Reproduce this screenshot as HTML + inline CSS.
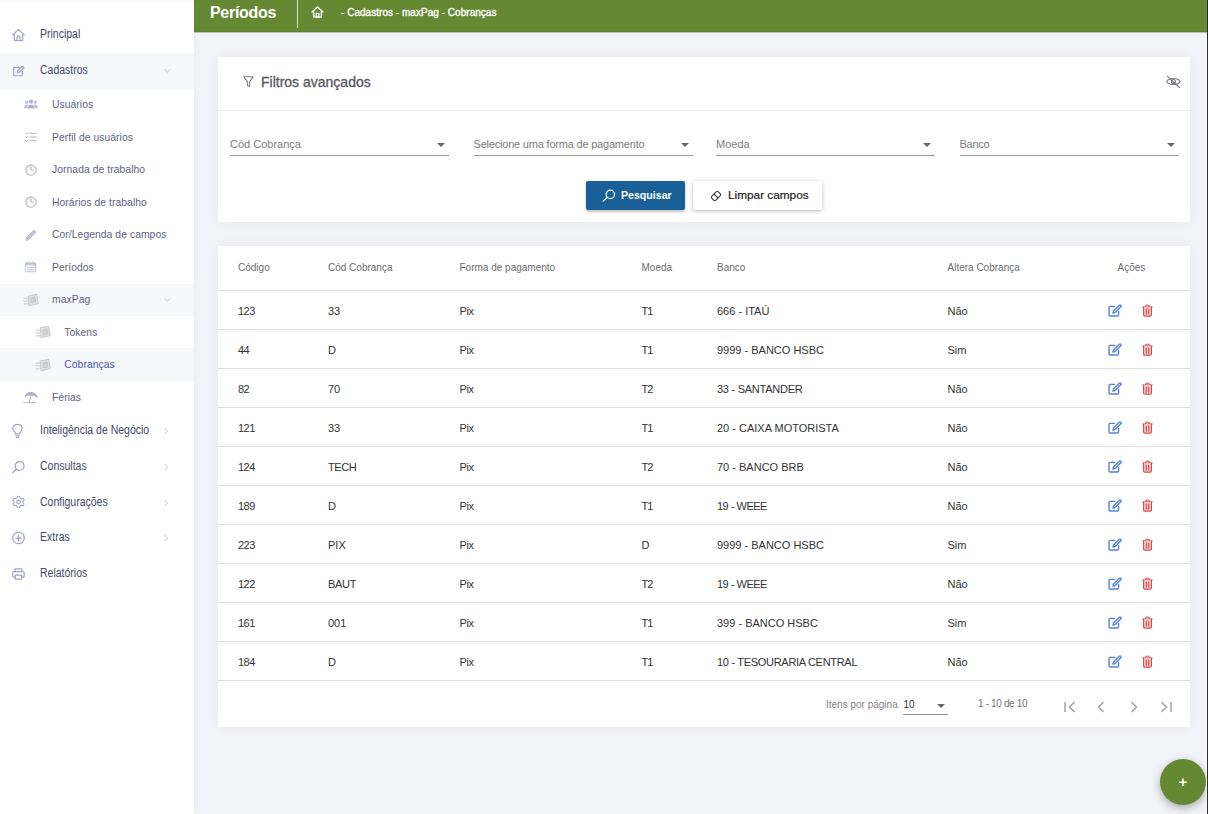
<!DOCTYPE html>
<html lang="pt-BR">
<head>
<meta charset="utf-8">
<title>Períodos</title>
<style>
*{box-sizing:border-box;margin:0;padding:0}
html,body{width:1208px;height:814px;overflow:hidden}
body{background:#f2f3f8;font-family:"Liberation Sans",sans-serif;position:relative;color:#333}
.edge{position:absolute;left:1207px;top:0;width:1px;height:814px;background:#2a2a2c;z-index:50}
.edge2{position:absolute;left:1206px;top:33px;width:1px;height:781px;background:#fdfdff;z-index:49}
.edge3{position:absolute;left:1206px;top:0;width:1px;height:32px;background:#6a8e38;z-index:49}
/* sidebar */
.side{position:absolute;left:0;top:0;width:194px;height:814px;background:#fff;box-shadow:0 0 6px rgba(82,63,105,.06)}
.side .topshade{position:absolute;left:0;top:0;width:194px;height:3px;background:linear-gradient(#f5f5f5,#fff)}
.mi{position:absolute;left:0;width:194px;height:35.7px}
.mi.sub{height:32.4px}
.mi.act{background:#f7f8fa}
.mi .ic{position:absolute;top:50%;transform:translateY(-50%);display:block}
.mi .tx{position:absolute;top:50%;transform:translateY(-50%) scaleX(.875);transform-origin:0 50%;white-space:nowrap;font-size:12px;color:#44486a;line-height:14px;margin-top:-1px}
.mi.sub .tx{font-size:10.3px;color:#5e6283;transform:translateY(-50%);letter-spacing:.08px;margin-top:.6px}
.mi .tx.blue{color:#3d56b8}
.mi .chev{position:absolute;top:50%;transform:translateY(-50%)}
/* header */
.hdr{position:absolute;left:194px;top:0;width:1013px;height:32px;background:#658833;border-bottom:0}
.hdr:after{content:"";position:absolute;left:0;top:32px;width:1013px;height:1px;background:#b4c4a0}
.hdr:before{content:"";position:absolute;left:0;top:31px;width:1013px;height:1px;background:#5d842d}
.hdr h1{position:absolute;left:16px;top:2px;font-size:16px;line-height:22px;font-weight:bold;color:#fff;letter-spacing:-.3px}
.hdr .div{position:absolute;left:103px;top:0;width:1px;height:28px;background:rgba(255,255,255,.75)}
.hdr .home{position:absolute;left:117px;top:6px}
.hdr .bc{position:absolute;left:147px;top:6.5px;font-size:10px;line-height:12px;color:#fff;white-space:nowrap;-webkit-text-stroke:.35px #fff;letter-spacing:.03px}
/* cards */
.card{position:absolute;left:218px;width:972px;background:#fff;box-shadow:0 0 13px rgba(82,63,105,.05)}
.c1{top:57px;height:165px}
.c1 .ttl{position:absolute;left:43px;top:16px;font-size:14px;line-height:18px;color:#595960;white-space:nowrap;-webkit-text-stroke:.3px #595960}
.c1 .fic{position:absolute;left:25px;top:19px}
.c1 .eye{position:absolute;left:948px;top:18px}
.c1 .sep{position:absolute;left:0;top:53px;width:972px;height:1px;background:#ebedf2}
.fld{position:absolute;top:78px;width:219px;height:21px;border-bottom:1px solid #9a9a9a}
.fld span{position:absolute;left:0;top:3px;font-size:11px;line-height:13px;color:#7d7d7d;white-space:nowrap}
.fld i{position:absolute;right:4px;top:8px;width:0;height:0;border-left:4px solid transparent;border-right:4px solid transparent;border-top:4px solid #666}
.btn{position:absolute;top:124px;height:29px;border-radius:2px;font-size:10.6px;line-height:29px;white-space:nowrap}
.b1{left:368px;width:99px;background:#1a6098;color:#fff;font-weight:bold;box-shadow:0 2px 3px rgba(0,0,0,.25)}
.b2{left:475px;width:129px;background:#fff;color:#222;box-shadow:0 1px 4px rgba(0,0,0,.28)}
.btn svg{position:absolute}
.btn span{position:absolute;top:0}
/* table */
.c2{top:246px;height:481px}
.th,.td{position:absolute;white-space:nowrap}
.th{font-size:10px;line-height:12px;color:#6b6b6b;top:16px}
.row{position:absolute;left:0;width:972px;height:39px;border-top:1px solid #dfdfdf}
.td{font-size:11px;line-height:14px;color:#333;top:13px}
.row svg{position:absolute}
.pg{position:absolute;left:0;top:434px;width:972px;height:47px;border-top:1px solid #dfdfdf}
.pg span{position:absolute;white-space:nowrap;font-size:10px;line-height:12px;color:#757575}
/* fab */
.fab{position:absolute;left:1160px;top:759px;width:46px;height:46px;border-radius:50%;background:#658833;box-shadow:0 3px 8px rgba(0,0,0,.3);z-index:10}
.fab span{position:absolute;left:0;top:0;width:46px;height:46px;text-align:center;line-height:45px;font-size:15px;font-weight:bold;color:#fff}
</style>
</head>
<body>
<div class="side"><div class="topshade"></div>
<div class="mi" style="top:17.3px"><svg class="ic" style="left:12.2px;margin-top:0px" width="13" height="13" viewBox="0 0 13 13" fill="none" stroke="#a2a6c1" stroke-width="1.25" stroke-linecap="round" stroke-linejoin="round"><path d="M.8 6.4 L6.5 .9 L12.2 6.4"/><path d="M2.3 5.2 V12.1 H10.7 V5.2"/><path d="M5 12.1 V8.6 C5 6.8 8 6.8 8 8.6 V12.1"/></svg><span class="tx" style="left:40px">Principal</span></div>
<div class="mi act" style="top:53.0px"><svg class="ic" style="left:12.8px;margin-top:0px" width="12" height="11" viewBox="0 0 12 11" fill="none" stroke="#a2a6c1" stroke-width="1.25" stroke-linecap="round" stroke-linejoin="round"><path d="M6.4 1.8 H.8 V10.3 H9.3 V5.8"/><path d="M4.2 7.2 L4.8 5.2 L9.4 .8 L10.9 2.3 L6.3 6.7 Z"/></svg><span class="tx" style="left:40px">Cadastros</span><svg class="chev" style="left:164px" width="7" height="5" viewBox="0 0 7 5" fill="none" stroke="#c4c7d6" stroke-width="1" stroke-linecap="round" stroke-linejoin="round"><path d="M.8 1 L3.5 3.6 L6.2 1"/></svg></div>
<div class="mi sub" style="top:88.7px"><svg class="ic" style="left:23.5px;margin-top:-1.1px" width="14" height="10" viewBox="0 0 14 10" fill="none" stroke="#afb3ca" stroke-width="0" stroke-linecap="round" stroke-linejoin="round"><g fill="#afb3ca" stroke="none"><circle cx="7" cy="2.6" r="2.1"/><path d="M3.2 9.6 C3.2 4.6 10.8 4.6 10.8 9.6 Z"/><circle cx="2.6" cy="3.2" r="1.6" opacity=".8"/><circle cx="11.4" cy="3.2" r="1.6" opacity=".8"/><path d="M0 9.2 C0 5.4 3.6 5 4.4 6.2 C3.2 7 2.8 8.2 2.8 9.2 Z" opacity=".8"/><path d="M14 9.2 C14 5.4 10.4 5 9.6 6.2 C10.8 7 11.2 8.2 11.2 9.2 Z" opacity=".8"/></g></svg><span class="tx" style="left:52px">Usuários</span></div>
<div class="mi sub" style="top:121.2px"><svg class="ic" style="left:24.7px;margin-top:0px" width="12" height="10" viewBox="0 0 12 10" fill="none" stroke="#afb3ca" stroke-width="1" stroke-linecap="round" stroke-linejoin="round"><path d="M5 1.3 H11.4 M5 5 H11.4 M5 8.7 H11.4"/><path d="M.6 1.4 L1.5 2.2 L3 .5 M.6 5.1 L1.5 5.9 L3 4.2 M.6 8.8 L1.5 9.6 L3 7.9"/></svg><span class="tx" style="left:52px">Perfil de usuários</span></div>
<div class="mi sub" style="top:153.6px"><svg class="ic" style="left:24.7px;margin-top:0px" width="12" height="12" viewBox="0 0 12 12" fill="none" stroke="#afb3ca" stroke-width="1.15" stroke-linecap="round" stroke-linejoin="round"><circle cx="6" cy="6" r="5.2"/><path d="M6 2.6 V6 H8.6"/></svg><span class="tx" style="left:52px">Jornada de trabalho</span></div>
<div class="mi sub" style="top:186.1px"><svg class="ic" style="left:24.7px;margin-top:0px" width="12" height="12" viewBox="0 0 12 12" fill="none" stroke="#afb3ca" stroke-width="1.15" stroke-linecap="round" stroke-linejoin="round"><circle cx="6" cy="6" r="5.2"/><path d="M6 2.6 V6 H8.6"/></svg><span class="tx" style="left:52px">Horários de trabalho</span></div>
<div class="mi sub" style="top:218.5px"><svg class="ic" style="left:24.5px;margin-top:0px" width="12" height="12" viewBox="0 0 12 12" fill="none" stroke="#afb3ca" stroke-width="0.9" stroke-linecap="round" stroke-linejoin="round"><path d="M.9 11.1 L1.7 8.1 L9 .9 L11.1 3 L3.9 10.3 Z" fill="#afb3ca" fill-opacity=".75"/></svg><span class="tx" style="left:52px">Cor/Legenda de campos</span></div>
<div class="mi sub" style="top:251.0px"><svg class="ic" style="left:25.2px;margin-top:0px" width="11" height="11" viewBox="0 0 11 11" fill="none" stroke="#afb3ca" stroke-width="0.9" stroke-linecap="round" stroke-linejoin="round"><rect x=".6" y="1.4" width="9.8" height="9" /><path d="M.6 2.4 H10.4 M.6 3.4 H10.4 M2.6 5.8 H8.4 M2.6 8.4 H8.4 M3 .4 V1.4 M8 .4 V1.4"/></svg><span class="tx" style="left:52px">Períodos</span></div>
<div class="mi sub act" style="top:283.5px"><svg class="ic" style="left:22.8px;margin-top:0px" width="16" height="13" viewBox="0 0 16 13" fill="none" stroke="#c4c4c8" stroke-width="0.9" stroke-linecap="round" stroke-linejoin="round"><path d="M5.6 2.4 L13.6 .7 L15.3 10 L6.6 12.3 Z" fill="#e2e2e4"/><path d="M8 4.4 L12 3.5 L12.9 8.3 L8.8 9.4 Z" fill="#d0d0d3"/><path d="M1 4.6 H5 M.6 7.4 H5.4 M1 10.4 H6"/></svg><span class="tx" style="left:52px">maxPag</span><svg class="chev" style="left:164px" width="7" height="5" viewBox="0 0 7 5" fill="none" stroke="#c4c7d6" stroke-width="1" stroke-linecap="round" stroke-linejoin="round"><path d="M.8 1 L3.5 3.6 L6.2 1"/></svg></div>
<div class="mi sub" style="top:315.9px"><svg class="ic" style="left:35px;margin-top:0px" width="16" height="13" viewBox="0 0 16 13" fill="none" stroke="#c4c4c8" stroke-width="0.9" stroke-linecap="round" stroke-linejoin="round"><path d="M5.6 2.4 L13.6 .7 L15.3 10 L6.6 12.3 Z" fill="#e2e2e4"/><path d="M8 4.4 L12 3.5 L12.9 8.3 L8.8 9.4 Z" fill="#d0d0d3"/><path d="M1 4.6 H5 M.6 7.4 H5.4 M1 10.4 H6"/></svg><span class="tx" style="left:64.3px">Tokens</span></div>
<div class="mi sub act" style="top:348.4px"><svg class="ic" style="left:35px;margin-top:0px" width="16" height="13" viewBox="0 0 16 13" fill="none" stroke="#c4c4c8" stroke-width="0.9" stroke-linecap="round" stroke-linejoin="round"><path d="M5.6 2.4 L13.6 .7 L15.3 10 L6.6 12.3 Z" fill="#e2e2e4"/><path d="M8 4.4 L12 3.5 L12.9 8.3 L8.8 9.4 Z" fill="#d0d0d3"/><path d="M1 4.6 H5 M.6 7.4 H5.4 M1 10.4 H6"/></svg><span class="tx blue" style="left:64.3px">Cobranças</span></div>
<div class="mi sub" style="top:380.8px"><svg class="ic" style="left:23px;margin-top:0px" width="16" height="13" viewBox="0 0 16 13" fill="none" stroke="#afb3ca" stroke-width="1" stroke-linecap="round" stroke-linejoin="round"><path d="M.8 12.2 H12.6"/><path d="M6.2 12 L8 5.6"/><path d="M2.4 5.4 C3.6 .6 12.2 .2 14.6 6.8 C10.6 4.4 6.4 4 2.4 5.4 Z" fill="#afb3ca"/></svg><span class="tx" style="left:52px">Férias</span></div>
<div class="mi" style="top:413.3px"><svg class="ic" style="left:11.8px;margin-top:0px" width="11" height="15" viewBox="0 0 11 15" fill="none" stroke="#a2a6c1" stroke-width="1.25" stroke-linecap="round" stroke-linejoin="round"><path d="M3.5 10.4 C3.5 8.4 .9 7.8 .9 5 C.9 2.5 2.9 .8 5.5 .8 C8.1 .8 10.1 2.5 10.1 5 C10.1 7.8 7.5 8.4 7.5 10.4 Z"/><path d="M3.7 12.3 H7.3 M4.3 14 H6.7"/></svg><span class="tx" style="left:40px">Inteligência de Negócio</span><svg class="chev" style="left:164px" width="5" height="7" viewBox="0 0 5 7" fill="none" stroke="#c4c7d6" stroke-width="1" stroke-linecap="round" stroke-linejoin="round"><path d="M1 .8 L3.6 3.5 L1 6.2"/></svg></div>
<div class="mi" style="top:449.0px"><svg class="ic" style="left:12px;margin-top:0px" width="13" height="13" viewBox="0 0 13 13" fill="none" stroke="#a2a6c1" stroke-width="1.25" stroke-linecap="round" stroke-linejoin="round"><circle cx="7.6" cy="5.4" r="4.4"/><path d="M4.4 8.6 L.8 12.2"/></svg><span class="tx" style="left:40px">Consultas</span><svg class="chev" style="left:164px" width="5" height="7" viewBox="0 0 5 7" fill="none" stroke="#c4c7d6" stroke-width="1" stroke-linecap="round" stroke-linejoin="round"><path d="M1 .8 L3.6 3.5 L1 6.2"/></svg></div>
<div class="mi" style="top:484.7px"><svg class="ic" style="left:12px;margin-top:-0.8px" width="13" height="13" viewBox="0 0 13 13" fill="none" stroke="#a2a6c1" stroke-width="1.05" stroke-linecap="round" stroke-linejoin="round"><circle cx="6.5" cy="6.5" r="1.9"/><path d="M5.4 .8 H7.6 L8 2.4 L9.4 3.2 L11 2.7 L12.1 4.6 L10.9 5.7 V7.3 L12.1 8.4 L11 10.3 L9.4 9.8 L8 10.6 L7.6 12.2 H5.4 L5 10.6 L3.6 9.8 L2 10.3 L.9 8.4 L2.1 7.3 V5.7 L.9 4.6 L2 2.7 L3.6 3.2 L5 2.4 Z"/></svg><span class="tx" style="left:40px">Configurações</span><svg class="chev" style="left:164px" width="5" height="7" viewBox="0 0 5 7" fill="none" stroke="#c4c7d6" stroke-width="1" stroke-linecap="round" stroke-linejoin="round"><path d="M1 .8 L3.6 3.5 L1 6.2"/></svg></div>
<div class="mi" style="top:520.4px"><svg class="ic" style="left:12px;margin-top:0px" width="13" height="13" viewBox="0 0 13 13" fill="none" stroke="#a2a6c1" stroke-width="1.25" stroke-linecap="round" stroke-linejoin="round"><circle cx="6.5" cy="6.5" r="5.8"/><path d="M6.5 3.8 V9.2 M3.8 6.5 H9.2"/></svg><span class="tx" style="left:40px">Extras</span><svg class="chev" style="left:164px" width="5" height="7" viewBox="0 0 5 7" fill="none" stroke="#c4c7d6" stroke-width="1" stroke-linecap="round" stroke-linejoin="round"><path d="M1 .8 L3.6 3.5 L1 6.2"/></svg></div>
<div class="mi" style="top:556.1px"><svg class="ic" style="left:12px;margin-top:0px" width="13" height="12" viewBox="0 0 13 12" fill="none" stroke="#a2a6c1" stroke-width="1.25" stroke-linecap="round" stroke-linejoin="round"><path d="M3.2 3.6 V.8 H9.8 V3.6"/><path d="M3.2 9.2 H1.8 C1 9.2 .8 8.8 .8 8.2 V4.8 C.8 4 1.2 3.6 2 3.6 H11 C11.8 3.6 12.2 4 12.2 4.8 V8.2 C12.2 8.8 12 9.2 11.2 9.2 H9.8"/><rect x="3.2" y="7" width="6.6" height="4.2" rx=".6"/></svg><span class="tx" style="left:40px">Relatórios</span></div>
</div>
<div class="hdr">
  <h1>Períodos</h1><div class="div"></div>
  <svg class="home" width="13" height="12" viewBox="0 0 13 12" fill="none" stroke="#fff" stroke-width="1.3" stroke-linejoin="round" stroke-linecap="round"><path d="M1 6 L6.5 1 L12 6"/><path d="M2.6 5 V11 H10.4 V5"/><path d="M5.2 11 V7.3 H7.8 V11"/></svg>
  <div class="bc">- Cadastros - maxPag - Cobranças</div>
</div>
<div class="card c1">
  <svg class="fic" width="11" height="12" viewBox="0 0 11 12" fill="none" stroke="#808086" stroke-width="1.1" stroke-linejoin="round"><path d="M.8 .8 H10.2 L6.6 5.6 V10.6 L4.4 9.4 V5.6 Z"/></svg>
  <div class="ttl">Filtros avançados</div>
  <svg class="eye" width="15" height="14" viewBox="0 0 15 14" fill="none" stroke="#777a85" stroke-width="1.1" stroke-linecap="round"><path d="M.7 6.5 C3 2.5 11.8 2.5 14.1 6.5 C11.8 10.5 3 10.5 .7 6.5 Z"/><circle cx="7.4" cy="6.5" r="2"/><path d="M1.3 1.2 L13.4 12.5"/></svg>
  <div class="sep"></div>
  <div class="fld" style="left:12px"><span>Cód Cobrança</span><i></i></div>
  <div class="fld" style="left:255.5px"><span style="letter-spacing:-.2px">Selecione uma forma de pagamento</span><i></i></div>
  <div class="fld" style="left:498px"><span>Moeda</span><i></i></div>
  <div class="fld" style="left:741.5px"><span style="letter-spacing:-.25px">Banco</span><i></i></div>
  <div class="btn b1"><svg style="left:16px;top:8px" width="14" height="13" viewBox="0 0 14 13" fill="none" stroke="#fff" stroke-width="1.25" stroke-linecap="round"><circle cx="8.35" cy="5.4" r="4.2"/><path d="M5.3 8.5 L1.1 12.1"/></svg><span style="left:35px">Pesquisar</span></div>
  <div class="btn b2"><svg style="left:16.9px;top:8.7px" width="12" height="12" viewBox="0 0 12 12" fill="none" stroke="#333" stroke-width="1.05"><g transform="translate(6 6) rotate(-45)"><rect x="-4.5" y="-2.8" width="9" height="5.6" rx="1.2"/><path d="M0 -2.8 V2.8"/></g></svg><span style="left:35px;font-size:11.8px;-webkit-text-stroke:.2px #222">Limpar campos</span></div>
</div>
<div class="card c2">
<span class="th" style="left:20px">Código</span>
<span class="th" style="left:110px">Cód Cobrança</span>
<span class="th" style="left:241.5px">Forma de pagamento</span>
<span class="th" style="left:423.5px">Moeda</span>
<span class="th" style="left:499px">Banco</span>
<span class="th" style="left:729.5px">Altera Cobrança</span>
<span class="th" style="left:899.5px">Ações</span>
<div class="row" style="top:44px"><span class="td" style="left:20px;letter-spacing:-0.5px">123</span><span class="td" style="left:110px">33</span><span class="td" style="left:241.5px;letter-spacing:-0.4px">Pix</span><span class="td" style="left:423.5px;letter-spacing:-1px">T1</span><span class="td" style="left:499px">666 - ITAÚ</span><span class="td" style="left:729.5px">Não</span><svg style="left:890px;top:13px" width="14" height="13" viewBox="0 0 14 13" fill="none" stroke="#5682da" stroke-width="1.4" stroke-linecap="round" stroke-linejoin="round"><path d="M6.6 2.4 H2.2 C1.4 2.4 1 2.8 1 3.6 V10.8 C1 11.6 1.4 12 2.2 12 H9.4 C10.2 12 10.6 11.6 10.6 10.8 V7.4"/><path d="M5 9 L5.5 6.9 L11.3 1.2 C11.8 .7 12.4 .7 12.8 1.2 C13.3 1.6 13.3 2.2 12.8 2.7 L7.1 8.5 Z"/></svg><svg style="left:924px;top:13px" width="11" height="13" viewBox="0 0 11 13" fill="none" stroke="#d84e49" stroke-width="1.2" stroke-linecap="round" stroke-linejoin="round"><path d="M.8 3 H10.2"/><path d="M3.6 2.8 C3.6 .4 7.4 .4 7.4 2.8"/><path d="M1.6 3.2 V11 C1.6 11.8 2 12.2 2.8 12.2 H8.2 C9 12.2 9.4 11.8 9.4 11 V3.2" fill="#f6d4d2"/><path d="M4.3 5 V10.2 M6.7 5 V10.2"/></svg></div>
<div class="row" style="top:83px"><span class="td" style="left:20px;letter-spacing:-0.5px">44</span><span class="td" style="left:110px">D</span><span class="td" style="left:241.5px;letter-spacing:-0.4px">Pix</span><span class="td" style="left:423.5px;letter-spacing:-1px">T1</span><span class="td" style="left:499px">9999 - BANCO HSBC</span><span class="td" style="left:729.5px">Sim</span><svg style="left:890px;top:13px" width="14" height="13" viewBox="0 0 14 13" fill="none" stroke="#5682da" stroke-width="1.4" stroke-linecap="round" stroke-linejoin="round"><path d="M6.6 2.4 H2.2 C1.4 2.4 1 2.8 1 3.6 V10.8 C1 11.6 1.4 12 2.2 12 H9.4 C10.2 12 10.6 11.6 10.6 10.8 V7.4"/><path d="M5 9 L5.5 6.9 L11.3 1.2 C11.8 .7 12.4 .7 12.8 1.2 C13.3 1.6 13.3 2.2 12.8 2.7 L7.1 8.5 Z"/></svg><svg style="left:924px;top:13px" width="11" height="13" viewBox="0 0 11 13" fill="none" stroke="#d84e49" stroke-width="1.2" stroke-linecap="round" stroke-linejoin="round"><path d="M.8 3 H10.2"/><path d="M3.6 2.8 C3.6 .4 7.4 .4 7.4 2.8"/><path d="M1.6 3.2 V11 C1.6 11.8 2 12.2 2.8 12.2 H8.2 C9 12.2 9.4 11.8 9.4 11 V3.2" fill="#f6d4d2"/><path d="M4.3 5 V10.2 M6.7 5 V10.2"/></svg></div>
<div class="row" style="top:122px"><span class="td" style="left:20px;letter-spacing:-0.5px">82</span><span class="td" style="left:110px">70</span><span class="td" style="left:241.5px;letter-spacing:-0.4px">Pix</span><span class="td" style="left:423.5px;letter-spacing:-1px">T2</span><span class="td" style="left:499px;letter-spacing:-0.26px">33 - SANTANDER</span><span class="td" style="left:729.5px">Não</span><svg style="left:890px;top:13px" width="14" height="13" viewBox="0 0 14 13" fill="none" stroke="#5682da" stroke-width="1.4" stroke-linecap="round" stroke-linejoin="round"><path d="M6.6 2.4 H2.2 C1.4 2.4 1 2.8 1 3.6 V10.8 C1 11.6 1.4 12 2.2 12 H9.4 C10.2 12 10.6 11.6 10.6 10.8 V7.4"/><path d="M5 9 L5.5 6.9 L11.3 1.2 C11.8 .7 12.4 .7 12.8 1.2 C13.3 1.6 13.3 2.2 12.8 2.7 L7.1 8.5 Z"/></svg><svg style="left:924px;top:13px" width="11" height="13" viewBox="0 0 11 13" fill="none" stroke="#d84e49" stroke-width="1.2" stroke-linecap="round" stroke-linejoin="round"><path d="M.8 3 H10.2"/><path d="M3.6 2.8 C3.6 .4 7.4 .4 7.4 2.8"/><path d="M1.6 3.2 V11 C1.6 11.8 2 12.2 2.8 12.2 H8.2 C9 12.2 9.4 11.8 9.4 11 V3.2" fill="#f6d4d2"/><path d="M4.3 5 V10.2 M6.7 5 V10.2"/></svg></div>
<div class="row" style="top:161px"><span class="td" style="left:20px;letter-spacing:-0.5px">121</span><span class="td" style="left:110px">33</span><span class="td" style="left:241.5px;letter-spacing:-0.4px">Pix</span><span class="td" style="left:423.5px;letter-spacing:-1px">T1</span><span class="td" style="left:499px">20 - CAIXA MOTORISTA</span><span class="td" style="left:729.5px">Não</span><svg style="left:890px;top:13px" width="14" height="13" viewBox="0 0 14 13" fill="none" stroke="#5682da" stroke-width="1.4" stroke-linecap="round" stroke-linejoin="round"><path d="M6.6 2.4 H2.2 C1.4 2.4 1 2.8 1 3.6 V10.8 C1 11.6 1.4 12 2.2 12 H9.4 C10.2 12 10.6 11.6 10.6 10.8 V7.4"/><path d="M5 9 L5.5 6.9 L11.3 1.2 C11.8 .7 12.4 .7 12.8 1.2 C13.3 1.6 13.3 2.2 12.8 2.7 L7.1 8.5 Z"/></svg><svg style="left:924px;top:13px" width="11" height="13" viewBox="0 0 11 13" fill="none" stroke="#d84e49" stroke-width="1.2" stroke-linecap="round" stroke-linejoin="round"><path d="M.8 3 H10.2"/><path d="M3.6 2.8 C3.6 .4 7.4 .4 7.4 2.8"/><path d="M1.6 3.2 V11 C1.6 11.8 2 12.2 2.8 12.2 H8.2 C9 12.2 9.4 11.8 9.4 11 V3.2" fill="#f6d4d2"/><path d="M4.3 5 V10.2 M6.7 5 V10.2"/></svg></div>
<div class="row" style="top:200px"><span class="td" style="left:20px;letter-spacing:-0.5px">124</span><span class="td" style="left:110px;letter-spacing:-0.4px">TECH</span><span class="td" style="left:241.5px;letter-spacing:-0.4px">Pix</span><span class="td" style="left:423.5px;letter-spacing:-1px">T2</span><span class="td" style="left:499px">70 - BANCO BRB</span><span class="td" style="left:729.5px">Não</span><svg style="left:890px;top:13px" width="14" height="13" viewBox="0 0 14 13" fill="none" stroke="#5682da" stroke-width="1.4" stroke-linecap="round" stroke-linejoin="round"><path d="M6.6 2.4 H2.2 C1.4 2.4 1 2.8 1 3.6 V10.8 C1 11.6 1.4 12 2.2 12 H9.4 C10.2 12 10.6 11.6 10.6 10.8 V7.4"/><path d="M5 9 L5.5 6.9 L11.3 1.2 C11.8 .7 12.4 .7 12.8 1.2 C13.3 1.6 13.3 2.2 12.8 2.7 L7.1 8.5 Z"/></svg><svg style="left:924px;top:13px" width="11" height="13" viewBox="0 0 11 13" fill="none" stroke="#d84e49" stroke-width="1.2" stroke-linecap="round" stroke-linejoin="round"><path d="M.8 3 H10.2"/><path d="M3.6 2.8 C3.6 .4 7.4 .4 7.4 2.8"/><path d="M1.6 3.2 V11 C1.6 11.8 2 12.2 2.8 12.2 H8.2 C9 12.2 9.4 11.8 9.4 11 V3.2" fill="#f6d4d2"/><path d="M4.3 5 V10.2 M6.7 5 V10.2"/></svg></div>
<div class="row" style="top:239px"><span class="td" style="left:20px;letter-spacing:-0.5px">189</span><span class="td" style="left:110px">D</span><span class="td" style="left:241.5px;letter-spacing:-0.4px">Pix</span><span class="td" style="left:423.5px;letter-spacing:-1px">T1</span><span class="td" style="left:499px;letter-spacing:-0.5px">19 - WEEE</span><span class="td" style="left:729.5px">Não</span><svg style="left:890px;top:13px" width="14" height="13" viewBox="0 0 14 13" fill="none" stroke="#5682da" stroke-width="1.4" stroke-linecap="round" stroke-linejoin="round"><path d="M6.6 2.4 H2.2 C1.4 2.4 1 2.8 1 3.6 V10.8 C1 11.6 1.4 12 2.2 12 H9.4 C10.2 12 10.6 11.6 10.6 10.8 V7.4"/><path d="M5 9 L5.5 6.9 L11.3 1.2 C11.8 .7 12.4 .7 12.8 1.2 C13.3 1.6 13.3 2.2 12.8 2.7 L7.1 8.5 Z"/></svg><svg style="left:924px;top:13px" width="11" height="13" viewBox="0 0 11 13" fill="none" stroke="#d84e49" stroke-width="1.2" stroke-linecap="round" stroke-linejoin="round"><path d="M.8 3 H10.2"/><path d="M3.6 2.8 C3.6 .4 7.4 .4 7.4 2.8"/><path d="M1.6 3.2 V11 C1.6 11.8 2 12.2 2.8 12.2 H8.2 C9 12.2 9.4 11.8 9.4 11 V3.2" fill="#f6d4d2"/><path d="M4.3 5 V10.2 M6.7 5 V10.2"/></svg></div>
<div class="row" style="top:278px"><span class="td" style="left:20px;letter-spacing:-0.5px">223</span><span class="td" style="left:110px">PIX</span><span class="td" style="left:241.5px;letter-spacing:-0.4px">Pix</span><span class="td" style="left:423.5px;letter-spacing:-1px">D</span><span class="td" style="left:499px">9999 - BANCO HSBC</span><span class="td" style="left:729.5px">Sim</span><svg style="left:890px;top:13px" width="14" height="13" viewBox="0 0 14 13" fill="none" stroke="#5682da" stroke-width="1.4" stroke-linecap="round" stroke-linejoin="round"><path d="M6.6 2.4 H2.2 C1.4 2.4 1 2.8 1 3.6 V10.8 C1 11.6 1.4 12 2.2 12 H9.4 C10.2 12 10.6 11.6 10.6 10.8 V7.4"/><path d="M5 9 L5.5 6.9 L11.3 1.2 C11.8 .7 12.4 .7 12.8 1.2 C13.3 1.6 13.3 2.2 12.8 2.7 L7.1 8.5 Z"/></svg><svg style="left:924px;top:13px" width="11" height="13" viewBox="0 0 11 13" fill="none" stroke="#d84e49" stroke-width="1.2" stroke-linecap="round" stroke-linejoin="round"><path d="M.8 3 H10.2"/><path d="M3.6 2.8 C3.6 .4 7.4 .4 7.4 2.8"/><path d="M1.6 3.2 V11 C1.6 11.8 2 12.2 2.8 12.2 H8.2 C9 12.2 9.4 11.8 9.4 11 V3.2" fill="#f6d4d2"/><path d="M4.3 5 V10.2 M6.7 5 V10.2"/></svg></div>
<div class="row" style="top:317px"><span class="td" style="left:20px;letter-spacing:-0.5px">122</span><span class="td" style="left:110px;letter-spacing:-0.3px">BAUT</span><span class="td" style="left:241.5px;letter-spacing:-0.4px">Pix</span><span class="td" style="left:423.5px;letter-spacing:-1px">T2</span><span class="td" style="left:499px;letter-spacing:-0.5px">19 - WEEE</span><span class="td" style="left:729.5px">Não</span><svg style="left:890px;top:13px" width="14" height="13" viewBox="0 0 14 13" fill="none" stroke="#5682da" stroke-width="1.4" stroke-linecap="round" stroke-linejoin="round"><path d="M6.6 2.4 H2.2 C1.4 2.4 1 2.8 1 3.6 V10.8 C1 11.6 1.4 12 2.2 12 H9.4 C10.2 12 10.6 11.6 10.6 10.8 V7.4"/><path d="M5 9 L5.5 6.9 L11.3 1.2 C11.8 .7 12.4 .7 12.8 1.2 C13.3 1.6 13.3 2.2 12.8 2.7 L7.1 8.5 Z"/></svg><svg style="left:924px;top:13px" width="11" height="13" viewBox="0 0 11 13" fill="none" stroke="#d84e49" stroke-width="1.2" stroke-linecap="round" stroke-linejoin="round"><path d="M.8 3 H10.2"/><path d="M3.6 2.8 C3.6 .4 7.4 .4 7.4 2.8"/><path d="M1.6 3.2 V11 C1.6 11.8 2 12.2 2.8 12.2 H8.2 C9 12.2 9.4 11.8 9.4 11 V3.2" fill="#f6d4d2"/><path d="M4.3 5 V10.2 M6.7 5 V10.2"/></svg></div>
<div class="row" style="top:356px"><span class="td" style="left:20px;letter-spacing:-0.5px">161</span><span class="td" style="left:110px">001</span><span class="td" style="left:241.5px;letter-spacing:-0.4px">Pix</span><span class="td" style="left:423.5px;letter-spacing:-1px">T1</span><span class="td" style="left:499px">399 - BANCO HSBC</span><span class="td" style="left:729.5px">Sim</span><svg style="left:890px;top:13px" width="14" height="13" viewBox="0 0 14 13" fill="none" stroke="#5682da" stroke-width="1.4" stroke-linecap="round" stroke-linejoin="round"><path d="M6.6 2.4 H2.2 C1.4 2.4 1 2.8 1 3.6 V10.8 C1 11.6 1.4 12 2.2 12 H9.4 C10.2 12 10.6 11.6 10.6 10.8 V7.4"/><path d="M5 9 L5.5 6.9 L11.3 1.2 C11.8 .7 12.4 .7 12.8 1.2 C13.3 1.6 13.3 2.2 12.8 2.7 L7.1 8.5 Z"/></svg><svg style="left:924px;top:13px" width="11" height="13" viewBox="0 0 11 13" fill="none" stroke="#d84e49" stroke-width="1.2" stroke-linecap="round" stroke-linejoin="round"><path d="M.8 3 H10.2"/><path d="M3.6 2.8 C3.6 .4 7.4 .4 7.4 2.8"/><path d="M1.6 3.2 V11 C1.6 11.8 2 12.2 2.8 12.2 H8.2 C9 12.2 9.4 11.8 9.4 11 V3.2" fill="#f6d4d2"/><path d="M4.3 5 V10.2 M6.7 5 V10.2"/></svg></div>
<div class="row" style="top:395px"><span class="td" style="left:20px;letter-spacing:-0.5px">184</span><span class="td" style="left:110px">D</span><span class="td" style="left:241.5px;letter-spacing:-0.4px">Pix</span><span class="td" style="left:423.5px;letter-spacing:-1px">T1</span><span class="td" style="left:499px;letter-spacing:-0.3px">10 - TESOURARIA CENTRAL</span><span class="td" style="left:729.5px">Não</span><svg style="left:890px;top:13px" width="14" height="13" viewBox="0 0 14 13" fill="none" stroke="#5682da" stroke-width="1.4" stroke-linecap="round" stroke-linejoin="round"><path d="M6.6 2.4 H2.2 C1.4 2.4 1 2.8 1 3.6 V10.8 C1 11.6 1.4 12 2.2 12 H9.4 C10.2 12 10.6 11.6 10.6 10.8 V7.4"/><path d="M5 9 L5.5 6.9 L11.3 1.2 C11.8 .7 12.4 .7 12.8 1.2 C13.3 1.6 13.3 2.2 12.8 2.7 L7.1 8.5 Z"/></svg><svg style="left:924px;top:13px" width="11" height="13" viewBox="0 0 11 13" fill="none" stroke="#d84e49" stroke-width="1.2" stroke-linecap="round" stroke-linejoin="round"><path d="M.8 3 H10.2"/><path d="M3.6 2.8 C3.6 .4 7.4 .4 7.4 2.8"/><path d="M1.6 3.2 V11 C1.6 11.8 2 12.2 2.8 12.2 H8.2 C9 12.2 9.4 11.8 9.4 11 V3.2" fill="#f6d4d2"/><path d="M4.3 5 V10.2 M6.7 5 V10.2"/></svg></div>
<div class="pg"><span style="left:608px;top:18px;color:#858585">Itens por página</span><span style="left:685.5px;top:18px;color:#333">10</span><div style="position:absolute;left:685px;top:33px;width:45px;height:1px;background:#949494"></div><i style="position:absolute;left:719px;top:23px;width:0;height:0;border-left:4px solid transparent;border-right:4px solid transparent;border-top:4px solid #666"></i><span style="left:760px;top:17px;letter-spacing:-.35px">1 - 10 de 10</span><svg style="position:absolute;left:845.5px;top:19.5px" width="12" height="12" viewBox="0 0 12 12" fill="none" stroke="#a9a9a9" stroke-width="1.6" stroke-linecap="butt"><path d="M1 1 V11"/><path d="M10.5 1.2 L5.5 6 L10.5 10.8"/></svg><svg style="position:absolute;left:879px;top:19.5px" width="8" height="12" viewBox="0 0 8 12" fill="none" stroke="#a9a9a9" stroke-width="1.6" stroke-linecap="butt"><path d="M6.5 1.2 L1.5 6 L6.5 10.8"/></svg><svg style="position:absolute;left:912px;top:19.5px" width="8" height="12" viewBox="0 0 8 12" fill="none" stroke="#a9a9a9" stroke-width="1.6" stroke-linecap="butt"><path d="M1.5 1.2 L6.5 6 L1.5 10.8"/></svg><svg style="position:absolute;left:941.5px;top:19.5px" width="12" height="12" viewBox="0 0 12 12" fill="none" stroke="#a9a9a9" stroke-width="1.6" stroke-linecap="butt"><path d="M1.5 1.2 L6.5 6 L1.5 10.8"/><path d="M11 1 V11"/></svg></div>
</div>
<div class="fab"><span>+</span></div>
<div class="edge3"></div><div class="edge2"></div><div class="edge"></div>
</body>
</html>
